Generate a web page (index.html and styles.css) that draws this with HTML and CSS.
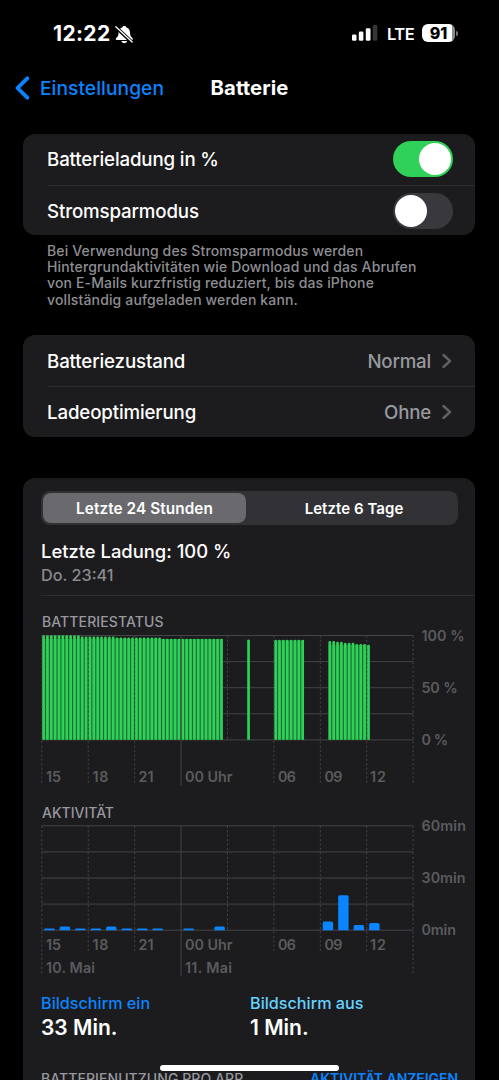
FILE: index.html
```
<!DOCTYPE html>
<html lang="de">
<head>
<meta charset="utf-8">
<title>Batterie</title>
<link rel="stylesheet" href="styles.css">
</head>
<body>
<div class="phone">
  <header class="status">
    <div class="status-left">
      <span class="clock">12:22</span>
      <svg class="bell" width="19" height="19" viewBox="0 0 19 19">
        <path d="M9.3 0.9c-1.1 0-1.9.6-2.2 1.5C4.9 3.1 3.7 5 3.6 7.2c-.1 3.1-.6 4.1-1.9 5.3-.6.6-.9 1-.9 1.6 0 .6.5 1 1.2 1h14.6c.7 0 1.2-.4 1.2-1 0-.6-.3-1-.9-1.6-1.3-1.200-1.800-2.200-1.900-5.300-.1-2.200-1.300-4.100-3.500-4.800C11.200 1.500 10.400.9 9.300.9zM6.400 16.100c.3 1.300 1.500 2.100 2.900 2.100s2.600-.8 2.900-2.100z" fill="#fff"/>
        <path d="M0 1.400L17.800 18" stroke="#000" stroke-width="3.600"/>
        <path d="M.8 1.800L17.200 17" stroke="#fff" stroke-width="1.300" stroke-linecap="round"/>
      </svg>
    </div>
    <div class="status-right">
      <svg class="signal" width="26" height="16" viewBox="0 0 26 16">
        <rect x="0" y="9.500" width="4.500" height="6.200" rx="1.300" fill="#fff"/>
        <rect x="6.800" y="6.600" width="4.600" height="9.100" rx="1.300" fill="#fff"/>
        <rect x="13.800" y="3.300" width="4.700" height="12.400" rx="1.300" fill="#fff"/>
        <rect x="20.800" y="0" width="4.500" height="15.700" rx="1.300" fill="#363638"/>
      </svg>
      <span class="net">LTE</span>
      <div class="battery"><span>91</span></div>
      <i class="battery-tip"></i>
    </div>
  </header>

  <nav class="nav">
    <a class="back">
      <svg width="16" height="24" viewBox="0 0 16 24"><path d="M13.300 2.300L3.500 12l9.800 9.700" fill="none" stroke="#0a84ff" stroke-width="3.800" stroke-linecap="round" stroke-linejoin="round"/></svg>
      <span>Einstellungen</span>
    </a>
    <h1 class="title">Batterie</h1>
  </nav>

  <section class="card toggles">
    <div class="row"><span class="label">Batterieladung in %</span><i class="switch on"></i></div>
    <div class="row"><span class="label">Stromsparmodus</span><i class="switch"></i></div>
  </section>
  <p class="note">Bei Verwendung des Stromsparmodus werden<br>Hintergrundaktivitäten wie Download und das Abrufen<br>von E-Mails kurzfristig reduziert, bis das iPhone<br>vollständig aufgeladen werden kann.</p>

  <section class="card links">
    <div class="row"><span class="label">Batteriezustand</span><span class="value">Normal</span><svg class="chev" width="10" height="16" viewBox="0 0 10 16"><path d="M1.500 2l6.500 6-6.500 6" fill="none" stroke="#606064" stroke-width="2.400" stroke-linecap="round" stroke-linejoin="round"/></svg></div>
    <div class="row"><span class="label">Ladeoptimierung</span><span class="value">Ohne</span><svg class="chev" width="10" height="16" viewBox="0 0 10 16"><path d="M1.500 2l6.500 6-6.500 6" fill="none" stroke="#606064" stroke-width="2.400" stroke-linecap="round" stroke-linejoin="round"/></svg></div>
  </section>

  <section class="card usage">
    <div class="segments"><span class="seg active">Letzte 24 Stunden</span><span class="seg">Letzte 6 Tage</span></div>
    <div class="last">
      <div class="last-title">Letzte Ladung: 100 %</div>
      <div class="last-time">Do. 23:41</div>
    </div>
    <svg id="level" class="chart" width="452" height="197" viewBox="23 596 452 197"></svg>
    <svg id="activity" class="chart" width="452" height="193" viewBox="23 793 452 193"></svg>
    <div class="totals">
      <div class="total"><div class="total-name on-screen">Bildschirm ein</div><div class="total-value">33 Min.</div></div>
      <div class="total"><div class="total-name off-screen">Bildschirm aus</div><div class="total-value">1 Min.</div></div>
    </div>
    <div class="apps"><span class="apps-title">BATTERIENUTZUNG PRO APP</span><span class="apps-link">AKTIVITÄT ANZEIGEN</span></div>
  </section>
  <div class="home"></div>
</div>
<script src="charts.js"></script>
</body>
</html>
```
FILE: styles.css
```
* { box-sizing: border-box; }
body { margin: 0; background: #000; color: #fff; font-family: Inter, "Liberation Sans", sans-serif; }
.phone { position: relative; width: 499px; height: 1080px; overflow: hidden; background: #000; }
svg { display: block; flex: none; }
span, div { white-space: nowrap; }

.status { height: 66px; padding: 0 41px 0 53px; display: flex; justify-content: space-between; align-items: center; }
.status-left, .status-right { display: flex; align-items: center; height: 66px; }
.clock { font-size: 21px; font-weight: 700; width: 62px; letter-spacing: 0.350px; padding-top: 1px; }
.bell { margin-top: 2px; }
.signal { margin-right: 9px; }
.net { width: 35px; font-size: 16.500px; font-weight: 600; letter-spacing: -0.450px; padding-top: 2px; }
.battery { width: 33px; height: 18px; border-radius: 6px; background: linear-gradient(90deg, #fff 30px, #8b8b8d 30px); color: #000; text-align: center; font-size: 16px; line-height: 19px; font-weight: 800; }
.battery-tip { width: 2px; height: 5px; margin-left: 1px; border-radius: 0 2px 2px 0; background: #77777a; }

.nav { height: 68px; display: grid; grid-template-columns: 173px 153px 1fr; align-items: start; padding-top: 10px; }
.back { display: flex; align-items: center; height: 24px; padding-left: 14px; gap: 10px; color: #0a84ff; font-size: 19.200px; letter-spacing: 0.050px; font-weight: 500; }
.title { margin: 0; height: 24px; line-height: 24px; text-align: center; font-size: 20.300px; letter-spacing: 0.100px; font-weight: 700; }

.card { margin: 0 24px 0 23px; border-radius: 12px; background: #1c1c1e; }
.row { height: 50.700px; margin-left: 24px; padding-right: 23px; display: flex; align-items: center; }
.row + .row { border-top: 1px solid #2b2b2d; }
.toggles .row { padding-right: 22px; }
.label { flex: 1; font-size: 18.700px; letter-spacing: -0.140px; font-weight: 550; padding-top: 1px; }
.value { color: #98989f; font-size: 18.700px; letter-spacing: -0.200px; font-weight: 500; margin-right: 11px; padding-top: 1px; }
.switch { width: 60px; height: 36px; border-radius: 18px; padding: 2px; background: #39393d; display: flex; }
.switch::after { content: ""; width: 32px; height: 32px; border-radius: 50%; background: #fff; }
.switch.on { background: #30d158; justify-content: flex-end; }
.note { height: 100px; margin: 0; padding: 7.600px 47px 0; color: #8e8e93; font-size: 14px; letter-spacing: 0.140px; line-height: 16.200px; font-weight: 500; }

.usage { height: 620px; margin-top: 41.200px; border-radius: 12px 12px 0 0; }
.segments { height: 47px; margin: 0 17px 0 18px; padding-top: 13px; display: grid; grid-template-columns: 205px 1fr; background: linear-gradient(#323236, #323236) 0 13px / 100% 34px no-repeat; clip-path: inset(13px 0 0 0 round 9px); }
.seg { height: 30px; margin-top: 2px; padding-left: 4px; line-height: 31px; text-align: center; font-size: 15px; letter-spacing: 0.050px; font-weight: 600; }
.seg.active { margin-left: 2px; padding-left: 0; background: #69696e; border-radius: 8px; font-size: 15.300px; letter-spacing: 0.100px; }
.last { height: 71px; margin-left: 18px; padding-top: 14px; border-bottom: 1px solid #2d2d2f; }
.last-title { font-size: 18.400px; line-height: 24px; font-weight: 500; }
.last-time { font-size: 16.200px; line-height: 24px; font-weight: 500; color: #8a8a8e; }
.chart text { font-family: Inter, "Liberation Sans", sans-serif; font-size: 14.300px; font-weight: 600; fill: #5b5b5e; }
.chart .heading { font-size: 14px; font-weight: 500; fill: #98989f; }
.totals { display: grid; grid-template-columns: 209px 1fr; margin-left: 18px; padding-top: 7px; }
.total-name { font-size: 16.200px; line-height: 20px; font-weight: 500; }
.on-screen { color: #0a84ff; }
.off-screen { color: #64d2ff; }
.total-value { font-size: 21px; line-height: 30px; font-weight: 600; }
.apps { margin: 27px 17px 0 18px; display: flex; justify-content: space-between; font-size: 14px; line-height: 18px; }
.apps-title { color: #98989f; font-weight: 500; letter-spacing: 0.070px; }
.apps-link { color: #0a84ff; font-weight: 600; letter-spacing: -0.050px; }
.home { position: absolute; left: 160px; top: 1065px; width: 179px; height: 6px; border-radius: 3px; background: #fff; }
```
FILE: charts.js
```
const LEFT = 41.8, RIGHT = 413.3, STEP = 46.42;

function line(x1, y1, x2, y2, dashed, color = "#444447") {
  return `<path d="M${x1} ${y1}L${x2} ${y2}" stroke="${color}" stroke-width="1"${dashed ? ' stroke-dasharray="2.2 2.2"' : ""}/>`;
}
function text(x, y, value, width, cls = "") {
  return `<text x="${x}" y="${y}" class="${cls}" textLength="${width}">${value}</text>`;
}
function rows(top) {
  let out = "";
  for (let i = 0; i < 5; i++) out += line(LEFT, top + i * 26.1, RIGHT, top + i * 26.1);
  return out;
}
function columns(top, ends) {
  return ends.map((end, i) => line(LEFT + i * STEP, top, LEFT + i * STEP, end, i !== 3)).join("");
}
function hours(y) {
  return [["15", 46, 15], ["18", 92.4, 16], ["21", 138.6, 15], ["00 Uhr", 185, 47.5], ["06", 278, 18], ["09", 324.4, 18], ["12", 370, 16]]
    .map(([v, x, w]) => text(x, y, v, w)).join("");
}

// Battery level, one bar per quarter hour
const level = [];
for (let i = 0; i < 47; i++) level.push([i, i < 10 ? 635.3 : i < 19 ? 636.6 : i < 31 ? 637.4 : 638.8]);
level.push([53, 639.6]);
for (let i = 60; i < 68; i++) level.push([i, 639.8]);
[641, 641, 641.8, 641.8, 642.8, 642.8, 642.8, 644, 644, 644, 644.8].forEach((y, k) => level.push([74 + k, y]));
const barX = i => 42.2 + i * 3.868;
let levelBars = [[0, 46, 639], [60, 67, 640.5], [74, 84, 645]].map(([a, b, y]) =>
  `<rect x="${barX(a)}" y="${y}" width="${barX(b) - barX(a) + 2.6}" height="${739.8 - y}" fill="#1f6b35"/>`).join("");
levelBars += level.map(([i, y]) =>
  `<path d="M${barX(i)} 739.8V${y + 1}q0-1 1.350-1t1.350 1V739.8z" fill="#30d158"/>`).join("");
document.getElementById("level").innerHTML =
  text(42, 627.3, "BATTERIESTATUS", 121.5, "heading") + rows(635.5) + levelBars +
  columns(635.5, [784, 784, 784, 786, 740, 784, 784, 784, 784]) + hours(782) +
  text(421.5, 640.5, "100 %", 43) + text(421.5, 692.5, "50 %", 36) + text(421.5, 744.5, "0 %", 26.5);

// Screen activity, one bar per hour
const minutes = [[0, 1.6], [1, 3.8], [2, 1.6], [3, 1.6], [4, 3.8], [5, 1.6], [6, 1.6], [7, 1.6], [9, 1.6], [11, 3.8], [18, 8.8], [19, 35], [20, 5.2], [21, 7.2]];
const activityBars = minutes.map(([i, h]) => {
  const x = 44.2 + i * 15.473, y = 930.2 - h, r = Math.min(1.5, h / 2);
  return `<path d="M${x} 930.2V${y + r}q0-${r} ${r}-${r}h${10.4 - 2 * r}q${r} 0 ${r} ${r}V930.2z" fill="#0a84ff"/>`;
}).join("");
document.getElementById("activity").innerHTML =
  text(42, 818, "AKTIVITÄT", 72, "heading") + rows(825.8) +
  columns(825.8, [975, 951, 951, 976, 930, 951, 951, 951, 975]) + activityBars + hours(949.5) +
  text(46, 973, "10. Mai", 49) + text(185, 973, "11. Mai", 47) +
  text(421.5, 831, "60min", 44.5) + text(421.5, 883, "30min", 44) + text(421.5, 935, "0min", 34.5);
```
